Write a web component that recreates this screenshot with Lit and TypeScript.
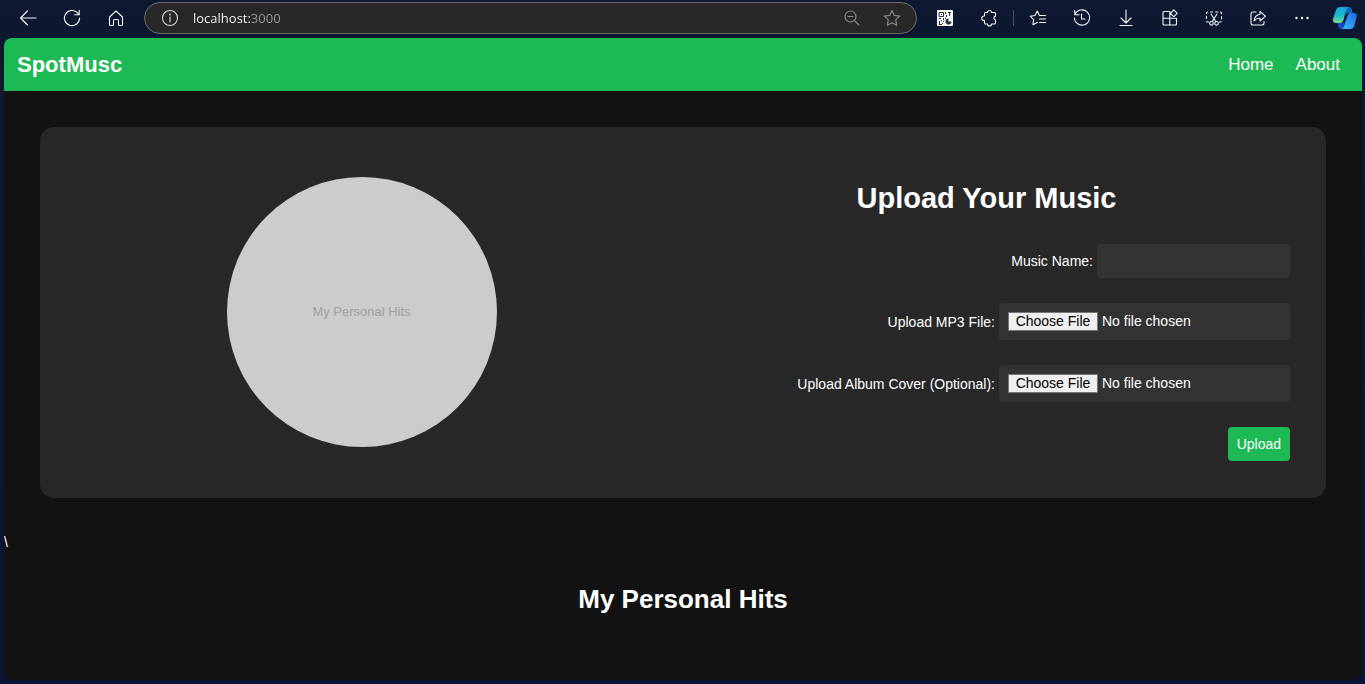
import { LitElement, html, css, svg } from "lit";
import { customElement } from "lit/decorators.js";

const icon = (body: unknown, size = 18) =>
  html`<svg class="icon" width=${size} height=${size} viewBox="0 0 ${size} ${size}" aria-hidden="true">${body}</svg>`;

const icons = {
  back: icon(svg`<path d="M17 9H1.500M8.500 2 1.500 9l7 7"/>`),
  reload: icon(svg`<path d="M16.600 9a7.600 7.600 0 1 1-2.400-5.500L16 5.600M16.200 1.200v4.600h-4.600"/>`),
  home: icon(svg`<path d="M2.500 8 9 2l6.500 6v7.500q0 1-1 1h-2q-1 0-1-1v-4q0-1-1-1h-3q-1 0-1 1v4q0 1-1 1h-2q-1 0-1-1z"/>`),
  info: icon(svg`<circle cx="9" cy="9" r="7.500"/><path d="M9 8v5"/><circle class="solid" cx="9" cy="5.500" r=".9"/>`),
  zoomOut: icon(svg`<circle cx="7.500" cy="7.500" r="5.500"/><path d="m11.500 11.500 4.500 4.500M5 7.500h5"/>`),
  star: icon(svg`<path d="m9 1.500 2.300 4.900 5.300.7-3.900 3.700 1 5.500L9 13.700l-4.700 2.600 1-5.500-3.900-3.700 5.300-.7z"/>`),
  qr: icon(svg`<rect class="solid" x="1" y="1" width="16" height="16" rx="1"/>
    <path class="ink" d="M3.500 3.500h4v4h-4z"/>
    <path class="inkfill" d="M5 5h1v1H5zM9 3h1v2H9zM10 6h1v2h-1zM12 3h3v1h-1v3h-1V4h-1zM3 9h2v1H3zM7 9h1v2H7zM5 11h1v1H5zM3 12h1v3h2v-1h1v1H6v1H3zM7 12h1v1H7zM9 9h1v1H9zM12.500 9.500a3 3 0 1 0 3 3h-3z"/>`),
  puzzle: icon(svg`<path d="M5.500 3.500h2a2 2 0 0 1 4 0h3q1 0 1 1v2.600a2 2 0 0 0 0 3.900v3q0 1-1 1h-3a2 2 0 0 1-4 0h-2q-1 0-1-1v-2.500a2.300 2.300 0 1 1 0-4.500V4.500q0-1 1-1z"/>`),
  favorites: icon(svg`<path d="M10.500 6.500 8.200 2 6 6.500l-4.800.7 3.500 3.500-.8 5 4.500-2.300M11 6.500h5.500M10.500 10h6M10.500 13.500h6"/>`),
  history: icon(svg`<path d="M2 5.500A7.600 7.600 0 1 1 1.400 9M1.800 1.500v4.300h4.400M8.500 5v5h3.500"/>`),
  download: icon(svg`<path d="M9 1v12.500M4 9l5 5 5-5M3 16.500h12"/>`),
  apps: icon(svg`<path d="M9 2.500H3q-1 0-1 1v11.500q0 1 1 1h11.500q1 0 1-1V9.200H2M8.800 2.500V16M12.800.9l3.400 3.400-3.400 3.400-3.400-3.400z"/>`),
  snip: icon(svg`<path class="dash" d="M4 13H2.500q-1 0-1-1V4q0-1 1-1h13q1 0 1 1v8q0 1-1 1H14"/>
    <path d="m6 5 4.800 7.500M12 5l-4.800 7.500"/><circle cx="6.500" cy="14.300" r="1.800"/><circle cx="11.500" cy="14.300" r="1.800"/>`),
  share: icon(svg`<path d="M7 3H4Q2 3 2 5v9q0 2 2 2h9q2 0 2-2v-1.500M11 2.500l5.500 4.700L11 12V9.300q-3.500-.3-5.800 2.500Q5.500 6 11 5.200z"/>`),
  more: icon(svg`<g class="solid"><circle cx="3.500" cy="9" r="1.200"/><circle cx="9" cy="9" r="1.200"/><circle cx="14.500" cy="9" r="1.200"/></g>`),
  copilot: icon(svg`<defs>
      <linearGradient id="cpLeft" x1="0" y1="0" x2="0" y2="1"><stop offset="0" stop-color="#1aa5e0"/><stop offset=".5" stop-color="#16b8cc"/><stop offset="1" stop-color="#7be08a"/></linearGradient>
      <linearGradient id="cpRight" x1="1" y1="0" x2="0" y2="1"><stop offset="0" stop-color="#2a62e0"/><stop offset=".6" stop-color="#2c9df2"/><stop offset="1" stop-color="#35bdf8"/></linearGradient>
    </defs>
    <path fill="#1467b8" stroke="none" d="M12 1h4q2 0 2.700 2l1 4h-4q-2 0-2.600 2z"/>
    <path fill="#1747cf" stroke="none" d="M5 17h5l2-2-1.500 6q-.5 2-2 2H8q-2 0-2.500-2z"/>
    <path fill="url(#cpLeft)" stroke="none" d="M7 1h9q-2 .3-2.600 2.500L10.500 14q-.8 3-3.500 3H3q-4 0-3-4L3 4q1-3 4-3z"/>
    <path fill="url(#cpRight)" stroke="none" d="M17 7h4q3.500 0 2.700 4l-2.500 9q-1 3-4 3H8.500q1.700-.5 2.300-2.500L14.500 10q.7-3 2.500-3z"/>`, 24),
};

@customElement("browser-bar")
export class BrowserBar extends LitElement {
  static styles = css`
    :host {
      display: flex;
      align-items: center;
      height: 36px;
      padding: 0 0 2px 6px;
      margin-right: -3px;
      margin-left: -4px;
      color: #f2f4f8;
    }
    .icon { display: block; fill: none; stroke: currentColor; stroke-width: 1.1; stroke-linejoin: round; stroke-linecap: round; }
    .solid { fill: currentColor; stroke: none; }
    .ink { stroke: #333; stroke-width: 1; }
    .inkfill { fill: #333; stroke: none; }
    .dash { stroke-dasharray: 3 2; stroke-linecap: butt; }
    .tool {
      display: grid;
      place-items: center;
      flex: 0 0 44px;
      height: 32px;
      padding: 0;
      border: 0;
      background: none;
      color: inherit;
    }
    .small { flex-basis: 40px; color: #8c8c8c; }
    .site { flex-basis: 38px; color: #d8d8d8; }
    .copilot { flex-basis: 41px; }
    .divider { flex: 0 0 1px; height: 16px; margin: 0 2px; background: #435069; }
    .address {
      display: flex;
      flex: 1;
      align-items: center;
      box-sizing: border-box;
      height: 32px;
      margin: 0 6px;
      padding: 0 4px 0 6px;
      border: 1px solid #6b6b6b;
      border-radius: 16px;
      background: #282828;
    }
    .url {
      flex: 1;
      min-width: 0;
      height: 24px;
      padding: 0 0 0 4px;
      border: 0;
      outline: 0;
      font: 13px/24px "Open Sans", "Noto Sans", sans-serif;
      color: transparent;
      background: linear-gradient(90deg, #fff 62px, #9a9a9a 62px);
      background-clip: text;
      -webkit-background-clip: text;
    }
  `;

  private tool(label: string, glyph: unknown, extra = "") {
    return html`<button class="tool ${extra}" type="button" aria-label=${label}>${glyph}</button>`;
  }

  render() {
    return html`
      ${this.tool("Back", icons.back)}${this.tool("Refresh", icons.reload)}${this.tool("Home", icons.home)}
      <div class="address">
        ${this.tool("Site information", icons.info, "site")}
        <input class="url" type="text" aria-label="Address" .value=${"localhost:3000"} />
        ${this.tool("Zoom out", icons.zoomOut, "small")}${this.tool("Add to favorites", icons.star, "small")}
      </div>
      ${this.tool("QR code", icons.qr)}${this.tool("Extensions", icons.puzzle)}
      <span class="divider"></span>
      ${this.tool("Favorites", icons.favorites)}${this.tool("History", icons.history)}
      ${this.tool("Downloads", icons.download)}${this.tool("Apps", icons.apps)}
      ${this.tool("Screenshot", icons.snip)}${this.tool("Share", icons.share)}
      ${this.tool("More", icons.more)}${this.tool("Copilot", icons.copilot, "copilot")}
    `;
  }
}

@customElement("upload-form")
export class UploadForm extends LitElement {
  static styles = css`
    :host { display: block; }
    .title { margin: 18px 0 29px; font-size: 29px; line-height: 34px; text-align: center; }
    .form { display: flex; flex-direction: column; align-items: flex-end; gap: 25px; }
    .row { display: flex; align-items: center; gap: 4px; }
    .field {
      box-sizing: border-box;
      border: 0;
      border-radius: 4px;
      background: #333;
      color: #fff;
      font: inherit;
    }
    .text { width: 193px; height: 34px; padding: 9px; }
    .file { width: 291px; height: 37px; padding: 9px; line-height: 19px; }
    .file::file-selector-button {
      box-sizing: border-box;
      width: 90px;
      height: 19px;
      margin: 0 4px 0 0;
      padding: 0;
      border: 1px solid #767676;
      border-radius: 0;
      background: #efefef;
      color: #000;
      font: inherit;
      line-height: 17px;
    }
    .submit {
      height: 34px;
      padding: 0 9px;
      border: 0;
      border-radius: 4px;
      background: #1db954;
      color: #fff;
      font: inherit;
    }
  `;

  render() {
    return html`
      <h1 class="title">Upload Your Music</h1>
      <form class="form" @submit=${(e: Event) => e.preventDefault()}>
        <div class="row">
          <label for="name">Music Name:</label>
          <input class="field text" id="name" type="text" />
        </div>
        <div class="row">
          <label for="mp3">Upload MP3 File:</label>
          <input class="field file" id="mp3" type="file" accept=".mp3" />
        </div>
        <div class="row">
          <label for="cover">Upload Album Cover (Optional):</label>
          <input class="field file" id="cover" type="file" accept="image/*" />
        </div>
        <button class="submit" type="submit">Upload</button>
      </form>
    `;
  }
}

@customElement("app-root")
export class AppRoot extends LitElement {
  static styles = css`
    :host {
      display: flex;
      flex-direction: column;
      box-sizing: border-box;
      min-height: 100vh;
      padding: 0 3px 4px 4px;
      background: linear-gradient(#0f1831, #0b1433);
      color: #fff;
      font: 14px/16px "Liberation Sans", Arial, sans-serif;
    }
    .page { flex: 1; border-radius: 8px; overflow: hidden; background: #121212; }
    .header {
      display: flex;
      align-items: center;
      justify-content: space-between;
      height: 53px;
      padding: 0 22px 0 13px;
      background: #1db954;
    }
    .brand { font-size: 22px; line-height: 26px; font-weight: bold; }
    .nav { display: flex; gap: 22px; }
    .link { color: #fff; font-size: 17px; line-height: 20px; text-decoration: none; }
    .card {
      display: grid;
      grid-template-columns: 1fr 1fr;
      margin: 36px;
      padding: 36px 0 37px;
      border-radius: 14px;
      background: #282828;
    }
    .disc {
      display: grid;
      place-items: center;
      place-self: center;
      width: 270px;
      height: 270px;
      border-radius: 50%;
      background: #ccc;
      color: #a0a0a0;
      font-size: 13px;
    }
    .upload { padding-right: 36px; }
    .hits { margin: 34px 0; font-size: 26px; line-height: 30px; text-align: center; }
  `;

  render() {
    return html`
      <browser-bar></browser-bar>
      <div class="page">
        <header class="header">
          <div class="brand">SpotMusc</div>
          <nav class="nav">
            <a class="link" href="#home">Home</a>
            <a class="link" href="#about">About</a>
          </nav>
        </header>
        <main>
          <section class="card">
            <div class="disc">My Personal Hits</div>
            <upload-form class="upload"></upload-form>
          </section>
          <div>${"\\"}</div>
          <h2 class="hits">My Personal Hits</h2>
        </main>
      </div>
    `;
  }
}
